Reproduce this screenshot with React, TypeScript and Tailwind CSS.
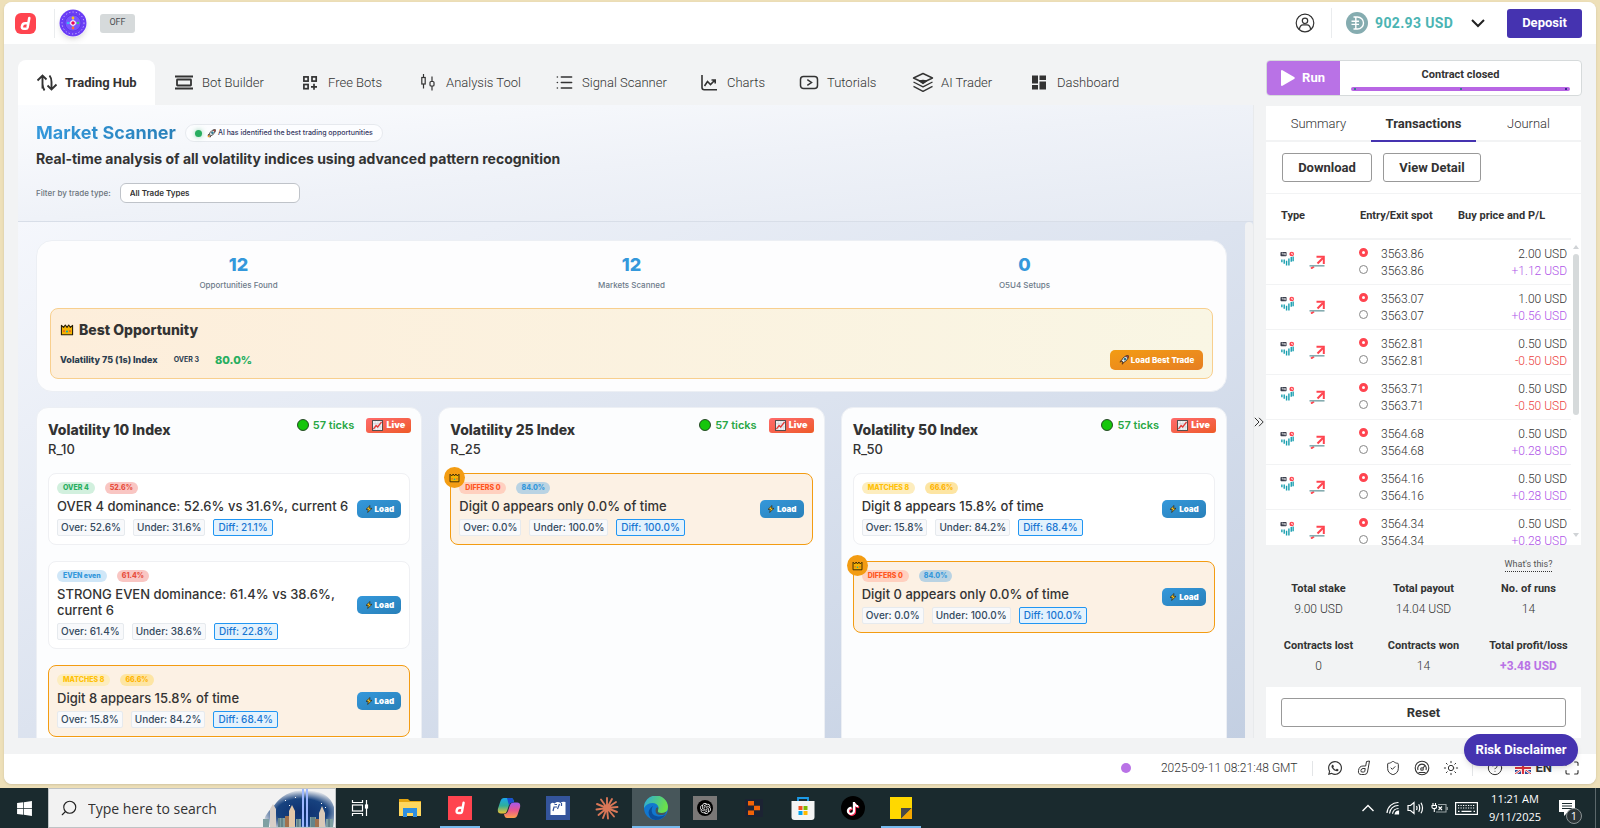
import React from "react";
import {
  CircleHelp,
  List,
  Maximize,
  Search,
  ShieldCheck,
  Sun,
} from "lucide-react";
import { FaWhatsapp, FaWindows, FaTiktok } from "react-icons/fa";
import { SiOpenai } from "react-icons/si";

const plex = "font-['Roboto','Liberation_Sans',sans-serif]";
const inter = "font-['Inter','Liberation_Sans',sans-serif]";

/* ---------- small drawings ---------- */

function DerivMark({ className = "" }: { className?: string }) {
  return (
    <svg viewBox="0 0 24 24" className={className} fill="none" stroke="white" strokeWidth="3.2" strokeLinecap="round" strokeLinejoin="round">
      <path d="M16.8 5 L14.6 17 Q14.2 18.7 12.4 18.7 H10 Q7 18.7 7.5 15.6 Q8.1 11.6 11.6 11.6 H15.2" />
    </svg>
  );
}

function WheelLogo() {
  return (
    <svg viewBox="0 0 28 28" className="size-7">
      <circle cx="14" cy="14" r="13.5" fill="#6a3df5" />
      <circle cx="14" cy="14" r="11" fill="none" stroke="#cfc2ff" strokeWidth="1" strokeDasharray="1.2 2.2" />
      <circle cx="14" cy="14" r="8" fill="#7a55ff" stroke="#5a36e0" strokeWidth=".8" />
      <path d="M14 9v10M9 14h10" stroke="#a9c4ff" strokeWidth="1" />
      <circle cx="14" cy="9" r="1.4" fill="#ffc21a" />
      <circle cx="14" cy="19" r="1.4" fill="#ff6b35" />
      <circle cx="9" cy="14" r="1.3" fill="#37b6f6" />
      <circle cx="19" cy="14" r="1.3" fill="#30c77b" />
      <circle cx="14" cy="14" r="2.8" fill="#fff" />
      <circle cx="14" cy="14" r="1.8" fill="#e6005c" />
    </svg>
  );
}

function Rocket({ className = "" }: { className?: string }) {
  return (
    <svg viewBox="0 0 16 16" className={className}>
      <path d="M3 9 L1.5 11.5 L4.5 11 Z M7 13 L5 14.8 L5 11.5 Z" fill="#c0392b" stroke="#222" strokeWidth=".9" />
      <path d="M14.8 1.2 C10 .8 6 4 4 9 L7 12 C12 10 15.2 6 14.8 1.2Z" fill="#dfe9ef" stroke="#1c1c1c" strokeWidth="1.2" />
      <path d="M14.8 1.2 L10.8 1.8 L14.2 5.2Z" fill="#e74c3c" stroke="#1c1c1c" strokeWidth=".7" />
      <circle cx="9.6" cy="6.6" r="1.7" fill="#1ba0c8" stroke="#1c1c1c" strokeWidth=".7" />
      <path d="M4.5 11.5 L1.5 14.5" stroke="#f39c12" strokeWidth="1.8" />
    </svg>
  );
}

function Crown({ className = "" }: { className?: string }) {
  return (
    <svg viewBox="0 0 16 14" className={className}>
      <path d="M1.5 12.5 V1.5 L4 4 L6 1.2 L8 4 L10 1.2 L12 4 L14.5 1.5 V12.5Z" fill="#f5b301" stroke="#2b2108" strokeWidth="1.3" strokeLinejoin="round" />
      <circle cx="4.5" cy="8.2" r="1" fill="#e0413a" />
      <circle cx="8" cy="8.8" r="1.2" fill="#1ba9a0" />
      <circle cx="11.5" cy="8.2" r="1" fill="#e0413a" />
    </svg>
  );
}

function Bolt() {
  return (
    <svg viewBox="0 0 12 12" className="size-2">
      <path d="M7.5 .8 L1.5 6.6 H5 L4 11.2 L10.5 5 H6.8 Z" fill="#ffc61a" stroke="#1c1c1c" strokeWidth="1" strokeLinejoin="round" />
    </svg>
  );
}

function ChartUp() {
  return (
    <svg viewBox="0 0 12 12" className="size-[11px]">
      <rect x=".6" y=".6" width="10.8" height="10.8" fill="#f3f4f6" stroke="#444" strokeWidth="1" />
      <path d="M3.5 1v10M6.5 1v10M9 1v10M1 4h10M1 7.5h10" stroke="#c7ccd1" strokeWidth=".6" />
      <path d="M1.5 10 L4.5 6 L6.2 7.6 L10.5 2" fill="none" stroke="#e53935" strokeWidth="1.4" />
    </svg>
  );
}

/* ---------- top bar ---------- */

function Header() {
  return (
    <header className={`flex h-[42px] shrink-0 items-center bg-white pr-[14px] pl-[11px] ${plex}`}>
      <a href="#home" aria-label="Deriv" className="flex size-[21px] items-center justify-center rounded-md bg-[#ff444f]">
        <DerivMark className="size-[19px]" />
      </a>
      <span className="ml-[18px] h-[29px] w-px bg-[#eaecee]" />
      <a href="#wheel" aria-label="Wheel" className="ml-1 rounded-full shadow-md">
        <WheelLogo />
      </a>
      <button className="ml-[13px] h-[19px] w-[35px] rounded-[3px] bg-[#d6dadb] text-[9px] text-[#4c5054]">OFF</button>
      <div className="ml-auto flex items-center">
        <button aria-label="Account">
          <svg viewBox="0 0 20 20" className="size-5" fill="none" stroke="#333" strokeWidth="1.2">
            <circle cx="10" cy="10" r="8.8" />
            <circle cx="10" cy="7.8" r="2.7" />
            <path d="M4.4 16.2 Q5 11.9 8 11.9 H12 Q15 11.9 15.6 16.2" />
          </svg>
        </button>
        <span className="ml-4 h-[30px] w-px bg-[#eaecee]" />
        <svg viewBox="0 0 22 22" className="ml-[14px] size-[22px]">
          <circle cx="11" cy="11" r="11" fill="#85acb0" />
          <path d="M7.5 5 H11.5 A6 6 0 0 1 11.5 17 H7.5 M9.8 5V17 M5.5 9.2H13 M5.5 12.4H13" fill="none" stroke="#fff" strokeWidth="1.4" />
        </svg>
        <button className="ml-[7px] flex items-center text-[14px] font-bold text-[#4bb4b3]">
          <span className="w-[96px] text-left tracking-wide">902.93 USD</span>
          <svg viewBox="0 0 14 9" className="h-[9px] w-[14px]" fill="none" stroke="#222" strokeWidth="2">
            <path d="M1 1 L7 7 L13 1" />
          </svg>
        </button>
        <button className="ml-[22px] h-[29px] w-[75px] rounded-[3px] bg-[#4533b0] text-[13px] font-bold text-white">Deposit</button>
      </div>
    </header>
  );
}

/* ---------- main tabs ---------- */

const iconBase = { fill: "none", stroke: "#333", strokeWidth: 1.6 } as const;

const tabs = [
  {
    label: "Trading Hub",
    width: "w-[137px] pl-[17px]",
    icon: (
      <svg viewBox="0 0 24 24" className="size-6" {...iconBase} strokeWidth="1.9">
        <path d="M7.500 17.500 V5 M2.500 9.500 L7.500 4.500 L11.500 8.500 M9.500 19.500 Q7.800 17 7.500 13 M14.500 4.500 Q16.500 7 16.500 11 V18.500 M12.500 14.500 L16.500 18.500 L21.500 13.500" />
      </svg>
    ),
  },
  {
    label: "Bot Builder",
    width: "w-[126px] pl-[17px]",
    icon: (
      <svg viewBox="0 0 24 24" className="size-6" {...iconBase} strokeWidth="1.8">
        <path d="M3 5.500H21 M3 17.500H21" />
        <rect x="5" y="8.500" width="14" height="6" rx=".5" />
      </svg>
    ),
  },
  {
    label: "Free Bots",
    width: "w-[118px] pl-[17px]",
    icon: (
      <svg viewBox="0 0 24 24" className="size-6" {...iconBase} strokeWidth="1.7">
        <rect x="5.900" y="5.900" width="4.200" height="4.200" />
        <rect x="14" y="5.900" width="4.200" height="4.200" />
        <rect x="5.900" y="13.500" width="4.200" height="4.200" />
        <path d="M16 12.800V18.800 M13 15.800H19" />
      </svg>
    ),
  },
  {
    label: "Analysis Tool",
    width: "w-[136px] pl-[17px]",
    icon: (
      <svg viewBox="0 0 24 24" className="size-6" {...iconBase} strokeWidth="1.2">
        <path d="M7.500 3V6.500 M7.500 13V17.500 M16 5.500V10.500 M16 15V19.500" />
        <rect x="5.800" y="6.500" width="3.400" height="6.500" />
        <rect x="14" y="10.500" width="4" height="4.500" rx="1" />
      </svg>
    ),
  },
  { label: "Signal Scanner", width: "w-[145px] pl-[17px]", icon: <List className="size-[19px] text-[#333]" strokeWidth={2} /> },
  {
    label: "Charts",
    width: "w-[100px] pl-[17px]",
    icon: (
      <svg viewBox="0 0 24 24" className="size-6" {...iconBase}>
        <path d="M5 4V16.500 Q5 18.700 7.200 18.700 H20 M7.500 15 L10.500 10.500 L13.500 13.500 L18 9 M14.500 9H18.200V12.600" />
      </svg>
    ),
  },
  {
    label: "Tutorials",
    width: "w-[114px] pl-[17px]",
    icon: (
      <svg viewBox="0 0 24 24" className="size-6" {...iconBase} strokeWidth="1.5">
        <rect x="3.500" y="5.500" width="17" height="12" rx="3" />
        <path d="M10.300 8.700 L14.500 11.500 L10.300 14.300" />
      </svg>
    ),
  },
  {
    label: "AI Trader",
    width: "w-[116px] pl-[17px]",
    icon: (
      <svg viewBox="0 0 24 24" className="size-6" {...iconBase} strokeWidth="1.4" strokeLinejoin="round">
        <path d="M12 2.500 L21.500 7 L12 11.500 L2.500 7Z M2.500 11 L12 15.800 L21.500 11 M2.500 15.300 L12 20.300 L21.500 15.300" />
        <path d="M8.500 10 L12 9.500 L15.500 10 L12 12.500Z" fill="#333" />
      </svg>
    ),
  },
  {
    label: "Dashboard",
    width: "w-[124px] pl-[17px]",
    icon: (
      <svg viewBox="0 0 24 24" className="size-6" fill="#333">
        <path d="M5 4.500h6v8H5zM12.500 4.500H19v4.500h-6.500zM5 14h6v4.500H5zM12.500 10.500H19v8h-6.500z" />
      </svg>
    ),
  },
];

function MainTabs() {
  return (
    <nav className={`flex h-[45px] shrink-0 ${plex}`}>
      {tabs.map((t, i) => (
        <button
          key={t.label}
          className={`flex shrink-0 items-center gap-[6px] text-[13px] whitespace-nowrap text-[#333] ${t.width} ${
            i === 0 ? "rounded-t-lg bg-white font-bold" : "font-light"
          }`}
        >
          <span className="flex size-6 shrink-0 items-center justify-center">{t.icon}</span>
          {t.label}
        </button>
      ))}
    </nav>
  );
}

/* ---------- market scanner ---------- */

type Opp = {
  tag: string;
  tagStyle: string;
  score: string;
  scoreStyle: string;
  text: string;
  over: string;
  under: string;
  diff: string;
  best?: boolean;
  crown?: boolean;
};

const matches: Opp = {
  tag: "MATCHES 8",
  tagStyle: "bg-[#fdedbe] text-[#ffc107]",
  score: "66.6%",
  scoreStyle: "bg-[#fde5a3] text-[#ffb300]",
  text: "Digit 8 appears 15.8% of time",
  over: "15.8%",
  under: "84.2%",
  diff: "68.4%",
};

const differs: Opp = {
  tag: "DIFFERS 0",
  tagStyle: "bg-[#ffd0bf] text-[#ff5722]",
  score: "84.0%",
  scoreStyle: "bg-[#b9d3e3] text-[#3498db]",
  text: "Digit 0 appears only 0.0% of time",
  over: "0.0%",
  under: "100.0%",
  diff: "100.0%",
  best: true,
  crown: true,
};

const markets: { name: string; symbol: string; opps: Opp[] }[] = [
  {
    name: "Volatility 10 Index",
    symbol: "R_10",
    opps: [
      {
        tag: "OVER 4",
        tagStyle: "bg-[#d2f0de] text-[#27ae60]",
        score: "52.6%",
        scoreStyle: "bg-[#f9c6c3] text-[#e74c3c]",
        text: "OVER 4 dominance: 52.6% vs 31.6%, current 6",
        over: "52.6%",
        under: "31.6%",
        diff: "21.1%",
      },
      {
        tag: "EVEN even",
        tagStyle: "bg-[#d0e7f8] text-[#3498db]",
        score: "61.4%",
        scoreStyle: "bg-[#f9c6c3] text-[#e74c3c]",
        text: "STRONG EVEN dominance: 61.4% vs 38.6%, current 6",
        over: "61.4%",
        under: "38.6%",
        diff: "22.8%",
      },
      { ...matches, best: true },
    ],
  },
  { name: "Volatility 25 Index", symbol: "R_25", opps: [differs] },
  { name: "Volatility 50 Index", symbol: "R_50", opps: [matches, differs] },
];

function Opportunity({ o }: { o: Opp }) {
  return (
    <article
      className={`relative flex items-center rounded-lg border p-2 ${
        o.best ? "border-[#f39c12] bg-[#fcf1e4]" : "border-[#eff0f3] bg-white"
      }`}
    >
      {o.crown && (
        <span className="absolute -top-[7px] -left-[7px] flex size-[21px] items-center justify-center rounded-full bg-[#f39c12]">
          <Crown className="h-[10px] w-[11px]" />
        </span>
      )}
      <div className="min-w-0 flex-1">
        <div className="flex h-3 items-center gap-[10px] text-[7px] font-extrabold">
          <span className={`flex h-3 items-center rounded-full px-[6px] ${o.tagStyle}`}>{o.tag}</span>
          <span className={`flex h-3 items-center rounded-full px-[5px] ${o.scoreStyle}`}>{o.score}</span>
        </div>
        <p className="mt-1 text-[13px] leading-4 font-medium text-[#333]">{o.text}</p>
        <div className="mt-[5px] flex gap-2 text-[10px] leading-[15px] font-medium text-[#34495e]">
          <span className="rounded-[2px] border border-[#e6eaee] bg-[#f8f9fb] px-[3px]">Over: {o.over}</span>
          <span className="rounded-[2px] border border-[#e6eaee] bg-[#f8f9fb] px-[3px]">Under: {o.under}</span>
          <span className="rounded-[2px] border border-[#2196f3] bg-[#e3f2fd] px-1 text-[#1976d2]">Diff: {o.diff}</span>
        </div>
      </div>
      <button className="ml-2 flex h-[18px] w-11 shrink-0 items-center justify-center gap-[2px] rounded-[5px] bg-linear-to-br from-[#3498db] to-[#2980b9] text-[8px] font-black text-white">
        <Bolt />
        Load
      </button>
    </article>
  );
}

function Scanner() {
  return (
    <main className={`flex min-h-0 flex-1 flex-col ${inter}`}>
      <section className="h-[116px] shrink-0 bg-linear-to-br from-[#fbfcfe] via-[#eff2f8] to-[#e5eaf3] px-[18px] pt-[18px]">
        <div className="flex items-center gap-[9px]">
          <h1 className="bg-linear-to-r from-[#3498db] to-[#2980b9] bg-clip-text text-[18px] leading-5 font-bold whitespace-nowrap text-transparent">
            Market Scanner
          </h1>
          <p className="flex h-[18px] items-center rounded-full border border-[#e6e9ee] bg-[#fcfdff] px-[9px] text-[7px] font-medium whitespace-nowrap text-[#34365e]">
            <span className="mr-[5px] size-[7px] rounded-full bg-[#27ae60] shadow-[0_0_5px_#27ae6080]" />
            <Rocket className="mr-[2px] size-[9px]" />
            AI has identified the best trading opportunities
          </p>
        </div>
        <p className="mt-[6px] text-[14px] leading-5 font-bold text-[#333]">
          Real-time analysis of all volatility indices using advanced pattern recognition
        </p>
        <div className="mt-[14px] flex items-center text-[8px]">
          <label htmlFor="filter" className="mr-[9px] font-medium whitespace-nowrap text-[#6c757d]">
            Filter by trade type:
          </label>
          <select
            id="filter"
            className="h-5 w-[180px] appearance-none rounded-[6px] border border-[#bfc3c9] bg-white px-[9px] text-[8px] font-semibold text-[#333]"
          >
            <option>All Trade Types</option>
          </select>
        </div>
      </section>

      <section className="flex min-h-0 flex-1 border-t border-[#d8dee8] bg-linear-to-br from-[#f5f7fc] to-[#c3cfe2]">
        <div className="min-w-0 flex-1 overflow-hidden px-[18px] pt-[18px]">
          <div className="rounded-2xl border border-[#eceff4] bg-[#fdfdfe] px-[13px] pt-[13px] pb-3">
            <dl className="grid grid-cols-3 gap-x-4 text-center">
              {[
                ["12", "Opportunities Found"],
                ["12", "Markets Scanned"],
                ["0", "O5U4 Setups"],
              ].map(([n, label]) => (
                <div key={label} className="flex flex-col-reverse gap-1">
                  <dt className="text-[8px] leading-3 font-medium text-[#6c7a89]">{label}</dt>
                  <dd className="text-[18px] leading-[21px] font-extrabold text-[#3498db]">{n}</dd>
                </div>
              ))}
            </dl>
            <div className="mt-[17px] rounded-lg border border-[#f8cf8e] bg-linear-to-r from-[#fdeedb] to-[#f9f6e4] px-[9px] pt-[11px] pb-2">
              <h2 className="flex items-center gap-[5px] text-[14px] leading-5 font-extrabold text-[#333]">
                <Crown className="h-3 w-[14px]" />
                Best Opportunity
              </h2>
              <div className="mt-[10px] flex h-5 items-center">
                <span className="text-[9px] font-extrabold text-[#2c3e50]">Volatility 75 (1s) Index</span>
                <span className="ml-4 text-[7px] font-bold text-[#2c3e50]">OVER 3</span>
                <span className="ml-4 text-[11px] font-extrabold text-[#27ae60]">80.0%</span>
                <button className="ml-auto flex h-5 w-[93px] items-center justify-center gap-[2px] rounded-[5px] bg-linear-to-br from-[#f39c12] to-[#e67e22] text-[8px] font-extrabold whitespace-nowrap text-white">
                  <Rocket className="size-[10px]" />
                  Load Best Trade
                </button>
              </div>
            </div>
          </div>

          <div className="mt-[15px] grid grid-cols-3 gap-4">
            {markets.map((m) => (
              <section key={m.symbol} className="rounded-xl border border-[#eceff4] bg-[#fcfdfe] px-[11px] pt-[9px] pb-[11px]">
                <div className="flex items-start">
                  <div className="pt-[3px]">
                    <h2 className="text-[14px] leading-5 font-extrabold text-[#333]">{m.name}</h2>
                    <p className="text-[13px] leading-[18px] font-medium text-[#333]">{m.symbol}</p>
                  </div>
                  <div className="-mr-px ml-auto flex items-center">
                    <svg viewBox="0 0 12 12" className="size-3">
                      <circle cx="6" cy="6" r="5.500" fill="#16c60c" stroke="#1b3a1b" strokeWidth=".9" />
                    </svg>
                    <span className="ml-1 text-[11px] leading-4 font-semibold text-[#28a745]">57 ticks</span>
                    <span className="ml-3 flex h-[15px] w-[45px] items-center justify-center gap-[3px] rounded-[3px] bg-linear-to-br from-[#ff6b6b] to-[#ee5a24] text-[9px] font-black text-white">
                      <ChartUp />
                      Live
                    </span>
                  </div>
                </div>
                <div className="mt-[15px] flex flex-col gap-4">
                  {m.opps.map((o) => (
                    <Opportunity key={o.tag} o={o} />
                  ))}
                </div>
              </section>
            ))}
          </div>
        </div>
        <div className="w-2 shrink-0 rounded-t bg-[#f0f1f3]" />
      </section>
    </main>
  );
}

/* ---------- right panel ---------- */

const rows = [
  ["3563.86", "2.00", "+1.12"],
  ["3563.07", "1.00", "+0.56"],
  ["3562.81", "0.50", "-0.50"],
  ["3563.71", "0.50", "-0.50"],
  ["3564.68", "0.50", "+0.28"],
  ["3564.16", "0.50", "+0.28"],
  ["3564.34", "0.50", "+0.28"],
];

function MarketIcon() {
  return (
    <svg viewBox="0 0 15 16" className="size-[15px]">
      <rect x="0" y="1" width="6.500" height="4.600" rx=".8" fill="#3b3f4d" />
      <path d="M1.300 2.300h1.400v2M3.900 2.200v1.200h1.500M5 2.200v2.400" stroke="#fff" strokeWidth=".7" fill="none" />
      <circle cx="12" cy="3.200" r="2.500" fill="#ff444f" />
      <path d="M12 2v1.400h1.500" stroke="#fff" strokeWidth=".9" fill="none" />
      <path d="M1.500 9v3M4 9v4.500M6.500 10.500v5M9 8v7.500M11.500 6.500v5M13.500 5.800v5" stroke="#1a9fb0" strokeWidth="1.500" />
    </svg>
  );
}

function RiseIcon() {
  return (
    <svg viewBox="0 0 16 14" className="h-[14px] w-4">
      <path d="M8.500 8.500 L14 3" stroke="#ff444f" strokeWidth="2.200" />
      <path d="M7.500 1.800H14.800V9" fill="none" stroke="#ff444f" strokeWidth="2" />
      <path d="M2 13.500 L5 11.500" stroke="#ff444f" strokeWidth="2" />
      <path d="M.5 10.800H15.500" stroke="#85acb0" strokeWidth="1.600" />
    </svg>
  );
}

const totals = [
  ["Total stake", "9.00 USD"],
  ["Total payout", "14.04 USD"],
  ["No. of runs", "14"],
  ["Contracts lost", "0"],
  ["Contracts won", "14"],
  ["Total profit/loss", "+3.48 USD"],
];

function SidePanel() {
  return (
    <aside className={`flex w-[316px] shrink-0 flex-col text-[#333] ${plex}`}>
      <div className="flex h-9 shrink-0 overflow-hidden rounded border border-[#d6dadb] bg-white">
        <button className="-my-px -ml-px flex w-[74px] items-center justify-center gap-[7px] bg-[#b972e6] text-[13px] font-bold text-white">
          <svg viewBox="0 0 14 16" className="h-4 w-[14px]" fill="#fff">
            <path d="M1 0 L13.500 7.300 Q14 8 13.500 8.700 L1 16 Q0 16 0 15 V1 Q0 0 1 0Z" />
          </svg>
          Run
        </button>
        <div className="flex flex-1 flex-col items-center px-[11px] pt-[6px]">
          <span className="text-[11px] leading-4 font-bold">Contract closed</span>
          <span className="mt-[4px] flex h-1 w-full items-center justify-between rounded-full bg-[#b866e4] px-[3px]">
            <i className="size-[2px] bg-[#377c8c]" />
            <i className="size-[2px] bg-[#377c8c]" />
            <i className="size-[2px] bg-[#3a2a8c]" />
          </span>
        </div>
      </div>

      <div className="mt-[10px] mr-px flex min-h-0 flex-1 flex-col bg-white">
        <div className="grid h-9 shrink-0 grid-cols-3 border-b-2 border-[#f2f3f4] text-[13px]">
          <button className="pt-px font-light">Summary</button>
          <button className="-mb-[2px] border-b-2 border-[#4533b0] pt-px font-bold">Transactions</button>
          <button className="pt-px font-light">Journal</button>
        </div>
        <div className="flex h-[52px] shrink-0 items-center gap-[11px] border-b border-[#f2f3f4] pl-4 text-[13px] font-bold">
          <button className="h-[29px] w-[90px] rounded-[3px] border border-[#999]">Download</button>
          <button className="h-[29px] w-[98px] rounded-[3px] border border-[#999]">View Detail</button>
        </div>
        <div className="relative min-h-0 flex-1 overflow-hidden pr-[10px]">
          <table className="w-full table-fixed border-collapse text-[12px]">
            <thead>
              <tr className="h-[45px] border-b-2 border-[#f2f3f4] text-left text-[11px]">
                <th className="w-[90px] pl-[15px] font-bold">Type</th>
                <th className="w-[102px] pl-1 font-bold">Entry/Exit spot</th>
                <th className="font-bold whitespace-nowrap">Buy price and P/L</th>
              </tr>
            </thead>
            <tbody>
              {rows.map(([spot, stake, pl]) => (
                <tr key={spot} className="h-[45px] border-b border-[#f2f3f4] font-light">
                  <td>
                    <div className="flex items-start gap-[14px] pb-[3px] pl-[14px]">
                      <MarketIcon />
                      <span className="pt-1">
                        <RiseIcon />
                      </span>
                    </div>
                  </td>
                  <td className="pt-[2px]">
                    {["border-[3px] border-[#ff444f]", "border border-[#888]"].map((ring) => (
                      <div key={ring} className="flex h-[17px] items-center gap-[13px] pl-[3px]">
                        <span className={`mb-[3px] size-[9px] rounded-full ${ring}`} />
                        {spot}
                      </div>
                    ))}
                  </td>
                  <td className="pt-[2px] pr-1 text-right">
                    <div className="leading-[17px]">{stake} USD</div>
                    <div className={pl[0] === "+" ? "leading-[17px] text-[#b057e8]" : "leading-[17px] text-[#ec3f3f]"}>{pl} USD</div>
                  </td>
                </tr>
              ))}
            </tbody>
          </table>
          <div className="absolute top-[51px] right-[2px] bottom-2 flex w-[6px] flex-col items-center justify-between">
            <svg viewBox="0 0 6 4" className="h-1 w-[6px]" fill="#d0d3d6">
              <path d="M3 0 L6 4 H0Z" />
            </svg>
            <span className="mt-[5px] mb-auto h-[161px] w-[6px] rounded-full bg-[#d6dadb]" />
            <svg viewBox="0 0 6 4" className="h-1 w-[6px]" fill="#d0d3d6">
              <path d="M0 0H6L3 4Z" />
            </svg>
          </div>
        </div>
        <div className="h-[142px] shrink-0 bg-[#f2f3f4] pt-[13px]">
          <div className="grid grid-cols-3">
            <button className="col-start-3 mx-auto border-b border-dotted border-[#333] text-[9px] leading-[13px] text-[#555]">
              What's this?
            </button>
          </div>
          <dl className="grid grid-cols-3 gap-y-[17px] pt-[7px] text-center">
            {totals.map(([label, value], i) => (
              <div key={label}>
                <dt className="text-[11px] leading-5 font-bold whitespace-nowrap">{label}</dt>
                <dd className={`text-[12px] leading-5 ${i === 5 ? "font-bold text-[#b972e6]" : "font-light"}`}>{value}</dd>
              </div>
            ))}
          </dl>
        </div>
        <div className="shrink-0 px-[15px] py-[11px]">
          <button className="block h-[29px] w-full rounded-[3px] border border-[#999] text-[13px] font-bold">Reset</button>
        </div>
      </div>
    </aside>
  );
}

/* ---------- footer ---------- */

function Flag() {
  return (
    <svg viewBox="0 0 16 12" className="h-3 w-4">
      <rect width="16" height="12" fill="#2a4b9b" />
      <path d="M0 0L16 12M16 0L0 12" stroke="#fff" strokeWidth="2.400" />
      <path d="M0 0L16 12M16 0L0 12" stroke="#e0333f" strokeWidth="1" />
      <path d="M8 0V12M0 6H16" stroke="#fff" strokeWidth="4" />
      <path d="M8 0V12M0 6H16" stroke="#e0333f" strokeWidth="2.200" />
    </svg>
  );
}

function Footer() {
  const line = <span className="h-[15px] w-px bg-[#e3e5e7]" />;
  return (
    <footer className={`relative flex h-[30px] shrink-0 items-center justify-end bg-white pr-4 pb-[2px] text-[12px] text-[#333] ${plex}`}>
      <span className="mr-[30px] size-[10px] rounded-full bg-[#b972e6]" />
      <time className="mr-[14px] font-light">2025-09-11 08:21:48 GMT</time>
      {line}
      <div className="mr-[13px] ml-[14px] flex items-center gap-[13px] text-[#333]">
        <FaWhatsapp className="size-4" />
        <svg viewBox="0 0 16 16" className="size-4" fill="none" stroke="#333" strokeWidth="1">
          <path d="M10.500 1.500 L13.500 1 L11.500 12 Q11 14.500 8.500 14.500 H5.500 Q1.800 14.500 2.500 10.500 Q3.200 6 7 6 H9.700 Z M9.200 8.500 H7 Q5.200 8.500 4.900 10.500 Q4.700 12 6 12 H7.800 Q8.700 12 8.800 11.300Z" />
        </svg>
        <ShieldCheck className="size-4" strokeWidth={1.5} />
        <svg viewBox="0 0 16 16" className="size-4" fill="none" stroke="#333" strokeWidth="1.100">
          <circle cx="8" cy="8" r="6.800" />
          <path d="M4 10 A4.300 4.300 0 1 1 12 10" />
          <circle cx="8" cy="9" r="1.300" />
          <path d="M9 8 L11 5.500 M4.500 12.500H11.500" />
        </svg>
        <Sun className="size-4" strokeWidth={1.5} />
      </div>
      {line}
      <CircleHelp className="mr-3 ml-[14px] size-4" strokeWidth={1.5} />
      <button className="mr-3 flex items-center gap-[5px] text-[13px] font-bold text-[#333]">
        <Flag />
        EN
      </button>
      <Maximize className="size-4" strokeWidth={1.7} />
      <button className="absolute right-[18px] bottom-[18px] h-8 w-[114px] rounded-full bg-[#4533b0] text-[13px] font-bold whitespace-nowrap text-white shadow-md">
        Risk Disclaimer
      </button>
    </footer>
  );
}

/* ---------- desktop taskbar ---------- */

function Skyline() {
  return (
    <svg viewBox="0 0 74 38" className="h-[38px] w-[74px]">
      <defs>
        <radialGradient id="sky" cx=".55" cy=".6" r=".6">
          <stop offset="0" stopColor="#0d2f6e" />
          <stop offset=".6" stopColor="#17427f" />
          <stop offset="1" stopColor="#f2f2f2" />
        </radialGradient>
      </defs>
      <path d="M2 38 Q2 26 12 18 Q24 0 46 1 Q68 2 73 18 V38Z" fill="url(#sky)" />
      <path d="M41 0h2v38h-2zM45 0h2v38h-2z" fill="#9db7ff" />
      <path d="M9 38V20l3-5 3 5v18z" fill="#d8cfc8" />
      <path d="M28 38V22l3-6 3 6v16z" fill="#e2c7a8" />
      <path d="M58 38V24l3-7 3 7v14z" fill="#d9c9b8" />
      <path d="M2 38V30h6v8zM17 38V29h8v9zM35 38V30h5v8zM49 38V28h6v10zM65 38V30h7v8z" fill="#7fa0a3" />
      <path d="M24 38V27h4v11zM54 38V30h4v8z" fill="#a2724e" />
      <path d="M18 29v9M21 29v9M51 28v10M53 28v10M68 30v8M37 30v8" stroke="#3d5a66" strokeWidth=".8" />
      <path d="M24 11h1v1h-1zM28 16h1v1h-1zM60 14h1v1h-1zM64 18h1v1h-1zM34 8h1v1h-1z" fill="#fff" />
    </svg>
  );
}

const apps: { name: string; tile: string; icon: React.ReactNode }[] = [
  {
    name: "Task view",
    tile: "w-12",
    icon: (
      <svg viewBox="0 0 18 18" className="size-[18px]" fill="none" stroke="#fff" strokeWidth="1.200">
        <path d="M1.500 1V3.500H11.500V1 M1.500 17V14.500H11.500V17 M15.500 1V17" />
        <rect x="1.500" y="6" width="10" height="6" />
        <rect x="14.500" y="6" width="2" height="3" fill="#fff" />
      </svg>
    ),
  },
  {
    name: "Files",
    tile: "w-[52px]",
    icon: (
      <svg viewBox="0 0 22 20" className="h-5 w-[22px]">
        <path d="M0 1h9l2 2h11v15H0z" fill="#e5a50f" />
        <path d="M0 4h22v14H0z" fill="#ffd75e" />
        <path d="M4 19v-9h14v9h-4v-4H8v4z" fill="#2f8fe0" />
      </svg>
    ),
  },
  {
    name: "Deriv",
    tile: "w-10 mx-1 border-b-2 border-[#76b9ed] pt-[2px]",
    icon: (
      <span className="flex size-6 items-center justify-center bg-[#ff444f]">
        <DerivMark className="size-[18px]" />
      </span>
    ),
  },
  {
    name: "Copilot",
    tile: "w-[50px]",
    icon: (
      <svg viewBox="0 0 24 22" className="h-[22px] w-6">
        <defs>
          <linearGradient id="ca" x1="0" y1="0" x2="0" y2="1">
            <stop offset="0" stopColor="#1aa7ee" />
            <stop offset=".5" stopColor="#2fae9a" />
            <stop offset="1" stopColor="#f2c230" />
          </linearGradient>
          <linearGradient id="cb" x1="0" y1="0" x2="0" y2="1">
            <stop offset="0" stopColor="#a259f0" />
            <stop offset=".5" stopColor="#e9568f" />
            <stop offset="1" stopColor="#ffa04a" />
          </linearGradient>
        </defs>
        <path d="M7 1h7q2 0 2.500 2l.5 2h-2q-2 0-3 3l-2 6q-1 2.500-3 2.500H4q-4 0-3-5L3.500 4Q4.500 1 7 1z" fill="url(#ca)" />
        <path d="M17 21h-7q-2 0-2.500-2L7 17q3 0 4-3l2-6q1-2.500 3-2.500h4q4 0 3 5L20.500 18Q19.500 21 17 21z" fill="url(#cb)" />
        <path d="M10 1h4q2 0 2.500 2l.5 2.500h-2q-2 0-3 3z" fill="#1a4fd0" />
      </svg>
    ),
  },
  {
    name: "Clips",
    tile: "w-[48px]",
    icon: (
      <svg viewBox="0 0 24 24" className="size-6">
        <path d="M0 0h24v24H0z" fill="#34549b" />
        <path d="M4.500 8q2-2 4-.5 3-2.500 6-.5 2-2 5-1v13h-15z" fill="#fff" />
        <path d="M7 15l1-4h3M8.500 8.500h2.500M13.500 8l-2 5M15.500 7v3" stroke="#34549b" strokeWidth="1.200" fill="none" />
      </svg>
    ),
  },
  {
    name: "Claude",
    tile: "w-[50px]",
    icon: (
      <svg viewBox="-12 -12 24 24" className="size-6" stroke="#d97757" strokeWidth="1.900" strokeLinecap="round">
        <path d="M0 0V-10M0 0L5-9M0 0L9-6M0 0L10.500-1M0 0L10 4M0 0L7 8.500M0 0L1 10.500M0 0L-4 10M0 0L-8.500 7M0 0L-10.500 1.500M0 0L-10-4M0 0L-6-8.500" />
      </svg>
    ),
  },
  {
    name: "Edge",
    tile: "w-12 bg-[#47565a] border-b-2 border-[#76b9ed] pt-[2px]",
    icon: (
      <svg viewBox="0 0 24 24" className="size-6">
        <defs>
          <linearGradient id="ea" x1="0" y1="0" x2="1" y2=".3">
            <stop offset="0" stopColor="#2aa8e0" />
            <stop offset="1" stopColor="#6be04a" />
          </linearGradient>
        </defs>
        <circle cx="12" cy="12" r="12" fill="#1177cf" />
        <path d="M0 12A12 12 0 0 1 24 11q0 6-6.500 6-5 0-4-2.500 1.500-1.500 1-3.500Q13 7 8.500 7 3 7 0 12z" fill="url(#ea)" />
        <path d="M8 12q-2 7 6 8.500 4 .5 8-2.500-4 6-10.500 6Q5 23 4.500 16.500 5 12.500 9 10z" fill="#0c4f9e" />
        <path d="M14 14.500Q13 17 17.500 17q2.500 0 5-1.500-1 2-2 3-9 2-9-4 0-3 2-3.500 1 1.500.5 3.500z" fill="#47565a" />
      </svg>
    ),
  },
  {
    name: "ChatGPT",
    tile: "w-[50px]",
    icon: (
      <span className="flex size-6 items-center justify-center bg-[#7a7877]">
        <span className="flex size-4 items-center justify-center rounded-full bg-black">
          <SiOpenai className="size-[11px] text-white" />
        </span>
      </span>
    ),
  },
  {
    name: "Replit",
    tile: "w-12",
    icon: (
      <svg viewBox="0 0 18 18" className="size-[18px]">
        <path d="M0 0h18v18H0z" fill="#1c2333" />
        <path d="M3 2h6v4.500H3zM9 6.800h6v4.500H9zM3 11.500h6V16H3z" fill="#f26207" />
      </svg>
    ),
  },
  {
    name: "Store",
    tile: "w-[50px]",
    icon: (
      <svg viewBox="0 0 24 24" className="size-6">
        <path d="M7 6V2h10v4" fill="none" stroke="#1c9be8" strokeWidth="1.800" />
        <path d="M.5 5h23v16q0 3-3 3h-17q-3 0-3-3z" fill="#f4f4f4" />
        <path d="M7.500 10h4v4h-4z" fill="#f25022" />
        <path d="M12.500 10h4v4h-4z" fill="#7fba00" />
        <path d="M7.500 15h4v4h-4z" fill="#00a4ef" />
        <path d="M12.500 15h4v4h-4z" fill="#ffb900" />
      </svg>
    ),
  },
  {
    name: "TikTok",
    tile: "w-[49px]",
    icon: (
      <span className="flex size-6 items-center justify-center rounded-full bg-black">
        <FaTiktok className="size-[13px] text-white drop-shadow-[1px_1px_0_#fe2c55]" />
      </span>
    ),
  },
  {
    name: "Notes",
    tile: "w-10 ml-1 border-b-2 border-[#76b9ed] pt-[2px]",
    icon: (
      <svg viewBox="0 0 22 22" className="size-[22px]">
        <path d="M0 0h22v22H0z" fill="#ffd800" />
        <path d="M11 11h11L11 22z" fill="#484848" />
        <path d="M22 11v11H11z" fill="#f5a800" />
      </svg>
    ),
  },
];

function Taskbar() {
  return (
    <div className="flex h-10 shrink-0 items-stretch bg-[#1a2a2e] font-['Open_Sans','Noto_Sans',sans-serif] text-white">
      <button aria-label="Start" className="flex w-12 items-center justify-center">
        <FaWindows className="size-[17px]" />
      </button>
      <label className="flex w-[288px] shrink-0 items-center border border-[#bfc3c5] bg-[#f2f2f2] pl-[11px]">
        <Search className="size-[18px] -scale-x-100 text-[#222]" strokeWidth={1.5} />
        <input
          type="text"
          placeholder="Type here to search"
          aria-label="Search"
          className="ml-[10px] w-0 flex-1 bg-transparent text-[14px] text-[#333] outline-none placeholder:text-[#333]"
        />
        <Skyline />
      </label>
      {apps.map((a) => (
        <button key={a.name} aria-label={a.name} className={`flex shrink-0 items-center justify-center ${a.tile}`}>
          {a.icon}
        </button>
      ))}
      <div className="ml-auto flex items-center">
        <svg viewBox="0 0 12 8" className="h-2 w-3" fill="none" stroke="#fff" strokeWidth="1.400">
          <path d="M.5 7 L6 1.500 L11.500 7" />
        </svg>
        <svg viewBox="0 0 14 14" className="ml-3 size-[14px]" fill="none" stroke="#fff" strokeWidth="1.200">
          <path d="M1 12A11 11 0 0 1 12.500 1.500" />
          <path d="M3.500 12.500A8.500 8.500 0 0 1 12.500 4.500" />
          <path d="M6.500 12.800A6 6 0 0 1 12.500 7.500" />
          <path d="M9.200 13A3.500 3.500 0 0 1 12.500 10.200V13Z" fill="#fff" />
        </svg>
        <svg viewBox="0 0 17 14" className="ml-[7px] h-[14px] w-[17px]" fill="none" stroke="#fff" strokeWidth="1.200">
          <path d="M1 4.500H3.500L7 1.500V12.500L3.500 9.500H1Z M9.500 5Q10.500 7 9.500 9 M11.700 3.300Q13.700 7 11.700 10.700 M14 1.700Q17 7 14 12.300" />
        </svg>
        <svg viewBox="0 0 17 12" className="ml-[7px] h-3 w-[17px]" fill="none" stroke="#fff" strokeWidth="1.100">
          <path d="M2 1V3 M4.500 1V3 M1 3.500H5.500V5Q5.500 6.500 3.300 6.500Q1 6.500 1 5Z M3.300 6.500V10" />
          <path d="M7 2.500H15V10H5 M16.300 5V8" stroke="#9aa3a5" />
          <path d="M7.500 4.500L11 8 M11 4.500L7.500 8" />
        </svg>
        <svg viewBox="0 0 23 13" className="ml-[7px] h-[13px] w-[23px]" fill="none" stroke="#fff" strokeWidth="1.200">
          <rect x=".6" y=".6" width="21.800" height="11.800" />
          <path d="M3 3.500H20M3 6H20" strokeDasharray="1.200 1.300" />
          <path d="M3 9.300H4.500M6.500 9.300H16.500M18.500 9.300H20" />
        </svg>
        <div className="ml-[10px] w-[54px] text-center text-[11px] leading-[18px] whitespace-nowrap">
          <div>11:21 AM</div>
          <div>9/11/2025</div>
        </div>
        <div className="relative ml-[17px] flex size-[26px] items-center">
          <svg viewBox="0 0 16 16" className="size-4">
            <path d="M0 0h16v12H9l-4 4v-4H0z" fill="#fff" />
            <path d="M3 3.500h10M3 6h10M3 8.500h10" stroke="#1a2a2e" strokeWidth="1" />
          </svg>
          <span className="absolute right-[3px] -bottom-[3px] flex size-4 items-center justify-center rounded-full border border-[#8b9395] bg-[#2b3437] text-[11px]">
            1
          </span>
        </div>
        <span className="ml-[10px] h-10 w-[5px] border-l border-[#5c686b]" />
      </div>
    </div>
  );
}

export default function App() {
  return (
    <div className="flex h-screen flex-col bg-[#eee0b9]">
      <div className="mx-1 mt-[2px] mb-1 flex min-h-0 flex-1 flex-col overflow-hidden rounded-lg bg-[#f2f3f4] shadow">
        <Header />
        <div className="flex min-h-0 flex-1 px-[14px] py-4">
          <div className="flex min-w-0 flex-1 flex-col">
            <MainTabs />
            <Scanner />
          </div>
          <div className="mt-[45px] flex w-[13px] shrink-0 items-center border-l border-[#e8eaec]">
            <button aria-label="Collapse panel">
              <svg viewBox="0 0 10 10" className="size-[10px]" fill="none" stroke="#333" strokeWidth="1">
                <path d="M.8 .8 L5 5 L.8 9.200 M5 .8 L9.200 5 L5 9.200" />
              </svg>
            </button>
          </div>
          <SidePanel />
        </div>
        <Footer />
      </div>
      <Taskbar />
    </div>
  );
}
